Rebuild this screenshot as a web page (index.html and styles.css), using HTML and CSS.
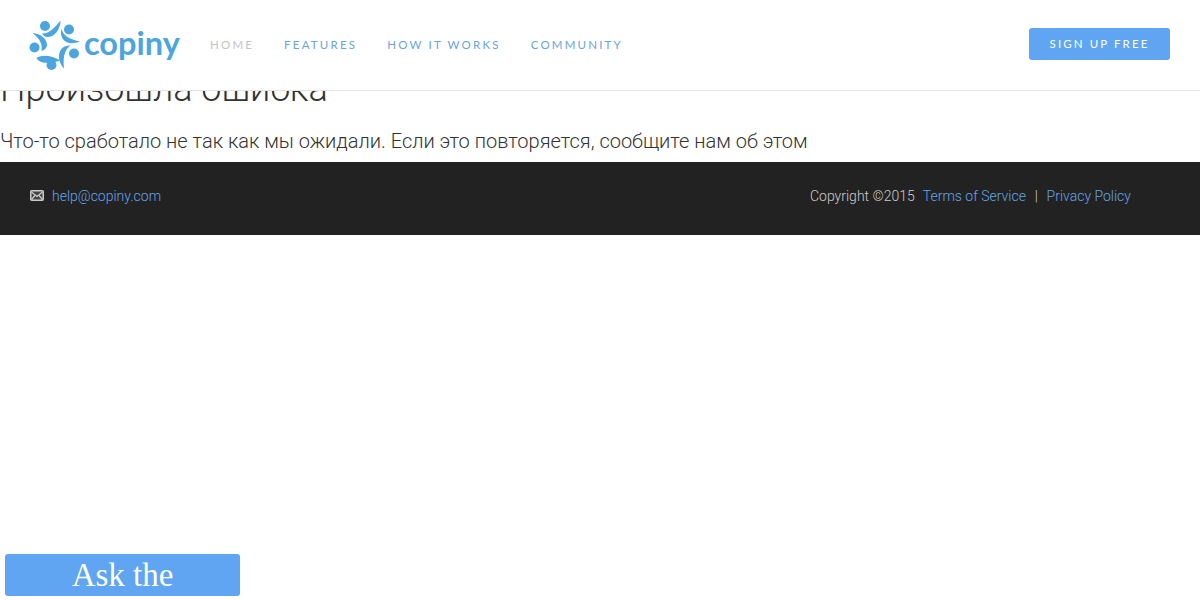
FILE: index.html
```html
<!DOCTYPE html>
<html lang="ru">
<head>
  <meta charset="UTF-8" />
  <title>Copiny</title>
  <link rel="stylesheet" href="styles.css">
</head>
<body>
  <header class="topbar">
    <a class="logo" href="#">
      <svg class="logo-mark" width="52" height="52" viewBox="29 19 52 52">
        <g fill="#4ba6df">
          <circle cx="45" cy="26" r="5" />
          <circle cx="69" cy="29.5" r="5" />
          <circle cx="34.5" cy="47.5" r="5" />
          <circle cx="74" cy="53.5" r="5" />
          <circle cx="51.5" cy="65" r="5" />
          <path d="M42 33.5C48 34 53 29.5 60.5 20.5C60.5 29 55 36.5 48.5 37C45.5 37.2 43.5 36 42 33.5Z" />
          <path d="M61.5 29C63 34.5 68 39 80 41.5C72.5 44.5 65.5 43.5 62.5 38.5C60.8 35.5 60.5 32 61.5 29Z" />
          <path d="M70.5 45.5C66 48.5 62.5 54.5 64 68.5C58.5 62.5 57.5 54.5 61 49.5C63 46.8 66.5 45.3 70.5 45.5Z" />
          <path d="M36.5 58C42 55 49 54.5 60.5 60.5C52 63 44 63.5 40 61.5C38.5 60.8 37.2 59.5 36.5 58Z" />
          <path d="M41.5 51C42.5 45.5 41 39.5 32.5 33C40.5 33.5 46.5 38.5 47 44.5C47.2 47.5 45 50 41.5 51Z" />
        </g>
      </svg>
      <span class="logo-text">copiny</span>
    </a>
    <nav class="mainnav">
      <a class="mainnav-link is-current" href="#">Home</a>
      <a class="mainnav-link" href="#">Features</a>
      <a class="mainnav-link" href="#">How it works</a>
      <a class="mainnav-link" href="#">Community</a>
    </nav>
    <a class="signup" href="#">Sign up free</a>
  </header>

  <main class="content">
    <h1 class="error-title">Произошла ошибка</h1>
    <p class="error-text">Что-то сработало не так как мы ожидали. Если это повторяется, сообщите нам об этом</p>
  </main>

  <footer class="footer">
    <div class="footer-mail">
      <svg class="mail-icon" width="14" height="11" viewBox="0 0 14 11">
        <rect x="0.75" y="0.75" width="12.5" height="9.5" rx="1" fill="#444" stroke="#ccc" stroke-width="1.5" />
        <path d="M1.5 2L7 6.4L12.5 2M1.5 9.5L5 5.5M12.5 9.5L9 5.5" fill="none" stroke="#ccc" stroke-width="1.2" />
      </svg>
      <a href="#">help@copiny.com</a>
    </div>
    <div class="footer-legal">
      <span class="copyright">Copyright ©2015</span>
      <a href="#">Terms of Service</a>
      <span class="sep">|</span>
      <a href="#">Privacy Policy</a>
    </div>
  </footer>

  <a class="ask" href="#">Ask the</a>
</body>
</html>
```

FILE: styles.css
```css
body {
  margin: 0;
  background: #fff;
  color: #333;
  font-family: Roboto, "Liberation Sans", sans-serif;
  font-weight: 300;
}
a {
  text-decoration: none;
}

/* header sits on top of the page, it covers part of the title */
.topbar {
  position: fixed;
  top: 0;
  left: 0;
  right: 0;
  z-index: 10;
  height: 90px;
  display: flex;
  align-items: center;
  padding: 0 30px;
  background: #fff;
  border-bottom: 1px solid #e4e4e4;
}
.logo {
  display: flex;
  align-items: center;
  gap: 3px;
  width: 180px;
  color: #4ba6df;
}
.logo-mark {
  margin-left: -1px;
}
.logo-text {
  font-family: Lato, sans-serif;
  font-size: 32.5px;
  font-weight: 700;
  line-height: 1;
  margin-top: -4px;
}
.mainnav {
  display: flex;
  gap: 30px;
  margin-top: -2px;
}
.mainnav-link {
  font-family: Lato, sans-serif;
  font-size: 11.5px;
  font-weight: 400;
  letter-spacing: 2.2px;
  text-transform: uppercase;
  color: #6ba3dd;
}
.mainnav-link.is-current {
  color: #c4c4c4;
}
.signup {
  margin-left: auto;
  margin-top: -2px;
  width: 141px;
  height: 32px;
  line-height: 32px;
  text-align: center;
  background: #5fa5f2;
  border-radius: 3px;
  color: #fff;
  font-family: Lato, sans-serif;
  font-size: 11.5px;
  font-weight: 400;
  letter-spacing: 2.1px;
  text-transform: uppercase;
}

.content {
  padding-top: 69px;
}
.error-title {
  margin: 0 0 19px;
  font-size: 36px;
  font-weight: 300;
  line-height: 40px;
  color: #333;
}
.error-text {
  margin: 0;
  padding-bottom: 8px;
  font-size: 20px;
  line-height: 26px;
  color: #333;
}

.footer {
  display: flex;
  justify-content: space-between;
  align-items: center;
  height: 73px;
  padding: 0 69px 5px 30px;
  box-sizing: border-box;
  background: #222;
  font-size: 14px;
  color: #ccc;
}
.footer a {
  color: #63a5ea;
}
.footer-mail {
  display: flex;
  align-items: center;
  gap: 8px;
}
.mail-icon {
  margin-top: -1px;
}
.footer-legal {
  display: flex;
  gap: 8px;
}
.sep {
  padding: 0 0.75px;
}

.ask {
  position: fixed;
  left: 5px;
  bottom: 4px;
  width: 235px;
  height: 42px;
  line-height: 42px;
  text-align: center;
  background: #5fa5f2;
  border-radius: 3px;
  color: #fff;
  font-family: "Liberation Serif", serif;
  font-size: 33px;
  font-weight: 400;
}
```
